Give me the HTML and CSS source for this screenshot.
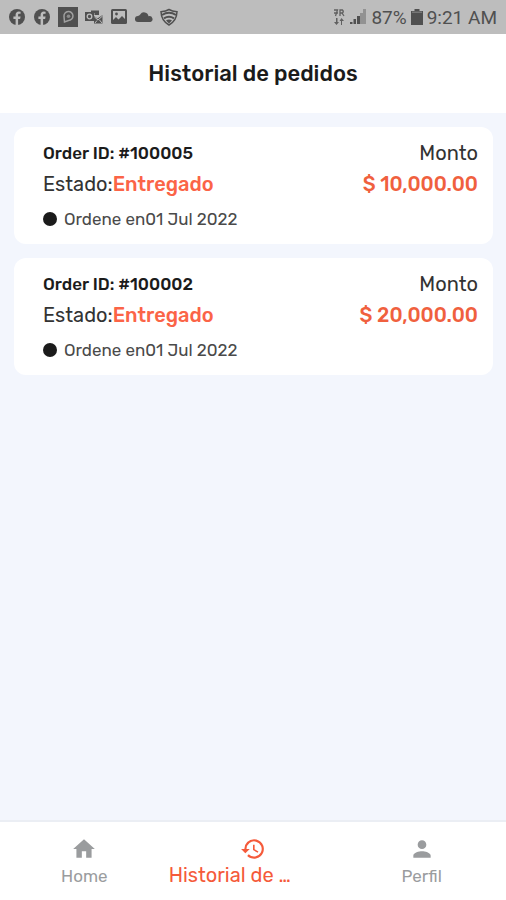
FILE: index.html
```
<!DOCTYPE html>
<html lang="es">

<head>
    <meta charset="UTF-8">
    <meta name="viewport" content="width=device-width, initial-scale=1.0">
    <title>Historial de pedidos</title>
    <link rel="stylesheet" href="styles.css">
</head>

<body>
    <div class="status-bar">
        <div class="status-icons">
            <svg class="status-icon" viewBox="0 0 18 18"><circle cx="9" cy="9" r="8" fill="#505050"/><path d="M7.6 17V11H5.4V8.5h2.2V7c0-2.3 1.2-3.5 3.3-3.5l1.7.2v2h-1.2c-1 0-1.3.5-1.3 1.3v1.5h2.5l-.5 2.5h-2v6z" fill="#bdbdbd"/></svg>
            <svg class="status-icon" viewBox="0 0 18 18"><circle cx="9" cy="9" r="8" fill="#505050"/><path d="M7.6 17V11H5.4V8.5h2.2V7c0-2.3 1.2-3.5 3.3-3.5l1.7.2v2h-1.2c-1 0-1.3.5-1.3 1.3v1.5h2.5l-.5 2.5h-2v6z" fill="#bdbdbd"/></svg>
            <svg class="status-icon status-icon-app" viewBox="0 0 20 20"><path d="M0 0h20v20H0z" fill="#505050"/><path d="M6.500 15 6 9.500A4.500 4.500 0 1 1 10.500 13.500z" fill="none" stroke="#a0a0a0" stroke-width="1.500"/><circle cx="10.500" cy="9.200" r="1.800" fill="#8c8c8c"/></svg>
            <svg class="status-icon" viewBox="0 0 18 18"><path d="M6 2.500h8V7H9.500V5H6zM9 8l3.500 2.500L17.500 7v8.500H9z" fill="#505050"/><path d="M9.500 9l3.500 3 4.500-4M10 15l2-2.500M17 15l-2.500-3" fill="none" stroke="#bdbdbd"/><path d="M0 4h9v9H0z" fill="#505050"/><circle cx="4.500" cy="8.500" r="2.300" fill="none" stroke="#bdbdbd" stroke-width="1.300"/></svg>
            <svg class="status-icon" viewBox="0 0 18 18"><rect x="1" y="1" width="16" height="15" rx="1.500" fill="#505050"/><path d="M3 3h12v8l-3-3-3.500 3.500L6 9l-3 3z" fill="#bdbdbd"/><circle cx="6.500" cy="6" r="1.400" fill="#505050"/></svg>
            <svg class="status-icon" viewBox="0 0 18 18"><path d="M3 14a3 3 0 0 1-.2-6C4 7.500 4.500 7.500 5.200 6.500a4.500 4.500 0 0 1 8.300 1.800 3 3 0 0 1 2 5.700z" fill="#505050"/></svg>
            <svg class="status-icon" viewBox="0 0 18 18"><path d="M9 1.500c2.500 1.500 5 2 8 2.300-.2 6-3 10.500-8 13.200C4 14.300 1.200 9.800 1 3.800c3-.3 5.500-.8 8-2.300z" fill="none" stroke="#505050" stroke-width="1.500"/><path d="M2 7c4.500-2.800 9.500-2.800 14 0M4 10.300c3.200-2 6.800-2 10 0" fill="none" stroke="#505050" stroke-width="2"/><path d="M6 12.500c2-1.200 4-1.200 6 0L9 15.500z" fill="#505050"/></svg>
        </div>
        <div class="status-info">
            <svg class="network-icon" viewBox="0 0 12 18"><path d="M1 2h3.500L2.500 8M7 8V2h2.500q1.500 1.500 0 3H7m2 0 2 3M1 5h4" fill="none" stroke="#606060" stroke-width="1.300"/><path d="M3 10v4H1l2.500 3L6 14H4.500v-4zM9 17v-4h2L8.500 10 6.500 13H8v4z" fill="#606060"/></svg>
            <svg class="signal-icon" viewBox="0 0 18 18"><path d="M1 14h2.500v2H1zM4.500 11h2.500v5H4.500zM8 8h3v8H8z" fill="#505050"/><path d="M11 5h3v11h-3zM14 1h3v15h-3z" fill="#929292"/></svg>
            <span class="battery-level">87%</span>
            <svg class="battery-icon" viewBox="0 0 12 18"><path d="M3.500 1h5v2H12v14H0V3h3.500z" fill="#505050"/><path d="M1 3.500h10V5H1z" fill="#777"/></svg>
            <span>9:21 AM</span>
        </div>
    </div>

    <header class="header">
        <h1>Historial de pedidos</h1>
    </header>

    <main class="orders">
        <article class="order">
            <div class="order-row">
                <strong class="order-id">Order ID: #100005</strong>
                <span>Monto</span>
            </div>
            <div class="order-row">
                <span>Estado:<b class="status">Entregado</b></span>
                <span class="amount">$ 10,000.00</span>
            </div>
            <div class="order-date"><span class="dot"></span>Ordene en01 Jul 2022</div>
        </article>
        <article class="order">
            <div class="order-row">
                <strong class="order-id">Order ID: #100002</strong>
                <span>Monto</span>
            </div>
            <div class="order-row">
                <span>Estado:<b class="status">Entregado</b></span>
                <span class="amount">$ 20,000.00</span>
            </div>
            <div class="order-date"><span class="dot"></span>Ordene en01 Jul 2022</div>
        </article>
    </main>

    <nav class="bottom-nav">
        <a href="#home" class="nav-item">
            <svg class="nav-icon" viewBox="0 0 24 24"><path d="M10 20v-6h4v6h5v-8h3L12 3 2 12h3v8z"/></svg>
            <span class="nav-label">Home</span>
        </a>
        <a href="#historial" class="nav-item active">
            <svg class="nav-icon" viewBox="0 0 24 24"><path d="M13 3a9 9 0 0 0-9 9H1l3.890 3.890.07.14L9 12H6a7 7 0 1 1 2.060 4.940l-1.420 1.420A9 9 0 1 0 13 3zm-1 5v5l4.280 2.540.72-1.210-3.500-2.080V8z"/></svg>
            <span class="nav-label">Historial de …</span>
        </a>
        <a href="#perfil" class="nav-item">
            <svg class="nav-icon" viewBox="0 0 24 24"><path d="M12 12a4 4 0 1 0 0-8 4 4 0 0 0 0 8zm0 2c-2.670 0-8 1.340-8 4v2h16v-2c0-2.660-5.330-4-8-4z"/></svg>
            <span class="nav-label">Perfil</span>
        </a>
    </nav>
</body>

</html>
```
FILE: styles.css
```
* {
    box-sizing: border-box;
}

body {
    margin: 0;
    min-height: 100vh;
    display: flex;
    flex-direction: column;
    font-family: Rubik, Roboto, sans-serif;
    font-size: 20px;
    color: #333;
    background: #f3f6fd;
}

.status-bar {
    display: flex;
    justify-content: space-between;
    align-items: center;
    height: 34px;
    padding: 0 9px 0 8px;
    font-family: Roboto, sans-serif;
    font-size: 19px;
    color: #505050;
    background: #bdbdbd;
}

.status-icons {
    display: flex;
    align-items: center;
    gap: 7px;
}

.status-icon {
    width: 18px;
    height: 18px;
}

.status-icon-app {
    width: 20px;
    height: 20px;
}

.status-info {
    display: flex;
    align-items: center;
    gap: 4px;
}

.network-icon,
.battery-icon {
    width: 12px;
    height: 18px;
}

.signal-icon {
    width: 18px;
    height: 18px;
}

.header {
    padding: 24px 16px;
    text-align: center;
    background: #fff;
}

h1 {
    margin: 0;
    font-size: 22px;
    font-weight: 500;
    line-height: 31px;
    color: #1b1b1b;
}

.orders {
    flex: 1;
    display: flex;
    flex-direction: column;
    gap: 14px;
    padding: 14px 13px 14px 14px;
}

.order {
    padding: 11px 15px 12px 29px;
    border-radius: 12px;
    background: #fff;
}

.order-row {
    display: flex;
    justify-content: space-between;
    align-items: center;
    line-height: 31px;
}

.order-id {
    font-size: 17px;
    font-weight: 500;
    color: #1b1b1b;
}

.status {
    font-weight: 500;
    color: #fb6447;
}

.amount {
    font-weight: 500;
    color: #f0603e;
}

.order-date {
    display: flex;
    align-items: center;
    gap: 7px;
    margin-top: 6px;
    font-size: 17px;
    line-height: 26px;
    color: #4a4a4a;
}

.dot {
    width: 14px;
    height: 14px;
    border-radius: 50%;
    background: #1b1b1b;
}

.bottom-nav {
    display: grid;
    grid-template-columns: repeat(3, 1fr);
    padding: 14px 0 10px;
    border-top: 2px solid #ebeef4;
    background: #fff;
}

.nav-item {
    display: flex;
    flex-direction: column;
    align-items: center;
    font-size: 17px;
    line-height: 28px;
    text-decoration: none;
    color: #9a9c9e;
}

.nav-icon {
    width: 26px;
    height: 26px;
    fill: currentColor;
}

.active {
    font-size: 20px;
    line-height: 26px;
    color: #f55a3a;
}

.active .nav-label {
    align-self: flex-start;
}
```
